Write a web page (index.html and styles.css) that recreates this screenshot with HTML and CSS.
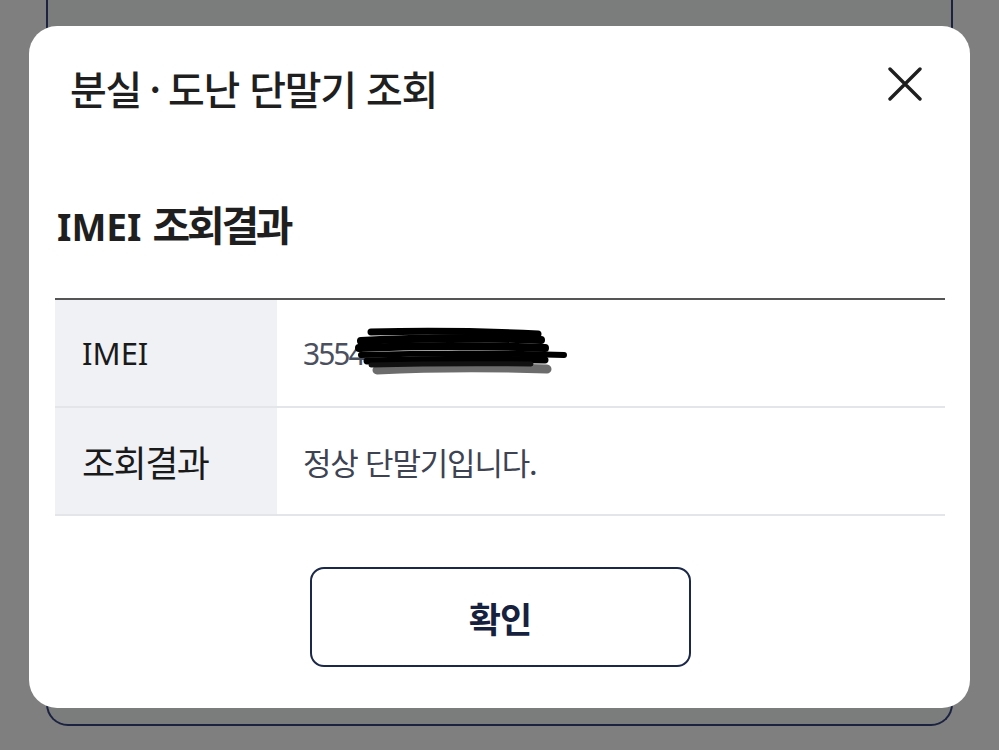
FILE: index.html
```html
<!DOCTYPE html>
<html lang="ko">
<head>
<meta charset="utf-8">
<title>분실·도난 단말기 조회</title>
<link rel="stylesheet" href="styles.css">
</head>
<body>
<div class="backdrop-card"></div>
<div class="modal">
  <div class="modal-header">
    <h1 class="modal-title">분실<span class="dot">·</span>도난 단말기 조회</h1>
    <button class="close-btn" aria-label="닫기">
      <svg width="34" height="34" viewBox="0 0 34 34"><path d="M2 2 L32 32 M32 2 L2 32" stroke="#1f1f1f" stroke-width="3.4" stroke-linecap="round" fill="none"/></svg>
    </button>
  </div>
  <h2 class="section-title"><span class="latin">IMEI</span> 조회결과</h2>
  <div class="result-table">
    <div class="row">
      <div class="th"><span class="latin-regular">IMEI</span></div>
      <div class="td imei-cell">
        <span class="latin-regular">3554</span>
        <svg class="scribble" width="300" height="80" viewBox="0 0 300 80">
          <path d="M100 70 Q180 66 270 69" stroke="#6c6c6c" stroke-width="9" stroke-linecap="round" fill="none"/>
          <path d="M94 32 Q180 30 261 34" stroke="#000" stroke-width="7" stroke-linecap="round" fill="none"/>
          <path d="M84 41 Q170 36 264 40" stroke="#000" stroke-width="8" stroke-linecap="round" fill="none"/>
          <path d="M82 48 Q170 44 268 48" stroke="#000" stroke-width="8" stroke-linecap="round" fill="none"/>
          <path d="M84 55 Q180 52 287 55" stroke="#000" stroke-width="6" stroke-linecap="round" fill="none"/>
          <path d="M90 61 Q180 58 268 60" stroke="#000" stroke-width="7" stroke-linecap="round" fill="none"/>
          <path d="M94 65 Q170 63 254 64" stroke="#111" stroke-width="5" stroke-linecap="round" fill="none"/>
        </svg>
      </div>
    </div>
    <div class="row">
      <div class="th">조회결과</div>
      <div class="td">정상 단말기입니다.</div>
    </div>
  </div>
  <div class="actions">
    <button class="confirm-btn">확인</button>
  </div>
</div>
</body>
</html>
```
FILE: styles.css
```css
* { box-sizing: border-box; }
html, body { margin: 0; padding: 0; }
body {
  width: 999px;
  height: 750px;
  background: #7f7f7f;
  position: relative;
  overflow: hidden;
  font-family: "Noto Sans CJK KR", "Noto Sans", sans-serif;
  color: #1f1f1f;
}
.backdrop-card {
  position: absolute;
  left: 46px;
  top: -40px;
  width: 907px;
  height: 766px;
  border: 2px solid #1b2340;
  border-top: none;
  border-radius: 0 0 22px 22px;
  background: #7b7d7d;
}
.modal {
  position: absolute;
  left: 29px;
  top: 26px;
  width: 941px;
  height: 682px;
  background: #fff;
  border-radius: 28px;
  padding: 0 25px 0 26px;
  display: flex;
  flex-direction: column;
}
.modal-header {
  display: flex;
  justify-content: space-between;
  align-items: center;
  height: 124px;
  padding-left: 15px;
  padding-right: 23px;
}
.modal-title {
  margin: 0;
  font-size: 40px;
  font-weight: 500;
  letter-spacing: -1.2px;
  line-height: 1;
  color: #1f1f1f;
}
.modal-title .dot {
  display: inline-block;
  margin: 0 8px;
}
.close-btn {
  border: none;
  background: none;
  padding: 0;
  width: 34px;
  height: 34px;
  margin-top: -8px;
  display: flex;
}
.section-title {
  margin: 0;
  padding-left: 2px;
  font-size: 41px;
  font-weight: 700;
  letter-spacing: -3.3px;
  line-height: 1;
  height: 148px;
  padding-top: 53px;
  color: #1f1f1f;
}
.section-title .latin { font-size: 37px; margin-right: 3px; }
.latin, .latin-regular { font-family: "Noto Sans", sans-serif; letter-spacing: 0; }
.result-table {
  border-top: 2px solid #555;
}
.row {
  display: grid;
  grid-template-columns: 222px 1fr;
  height: 108px;
  border-bottom: 2px solid #e4e5e8;
}
.th {
  background: #eff1f5;
  display: flex;
  align-items: center;
  padding-left: 27px;
  font-size: 36px;
  letter-spacing: -1.5px;
  color: #1a1a1a;
}
.th .latin-regular { font-size: 31px; letter-spacing: 0; }
.td {
  display: flex;
  align-items: center;
  padding-left: 26px;
  font-size: 31px;
  letter-spacing: -1.2px;
  color: #3e4352;
}
.td .latin-regular { font-size: 30px; letter-spacing: -2px; color: #4a505e; }
.imei-cell { position: relative; }
.scribble {
  position: absolute;
  left: 0;
  top: 0;
}
.actions {
  display: flex;
  justify-content: center;
  padding-top: 51px;
}
.confirm-btn {
  width: 381px;
  height: 100px;
  border: 2px solid #1b2848;
  border-radius: 14px;
  background: #fff;
  font-family: "Noto Sans CJK KR", sans-serif;
  font-size: 35px;
  font-weight: 700;
  color: #16213d;
  letter-spacing: -1px;
}
```
